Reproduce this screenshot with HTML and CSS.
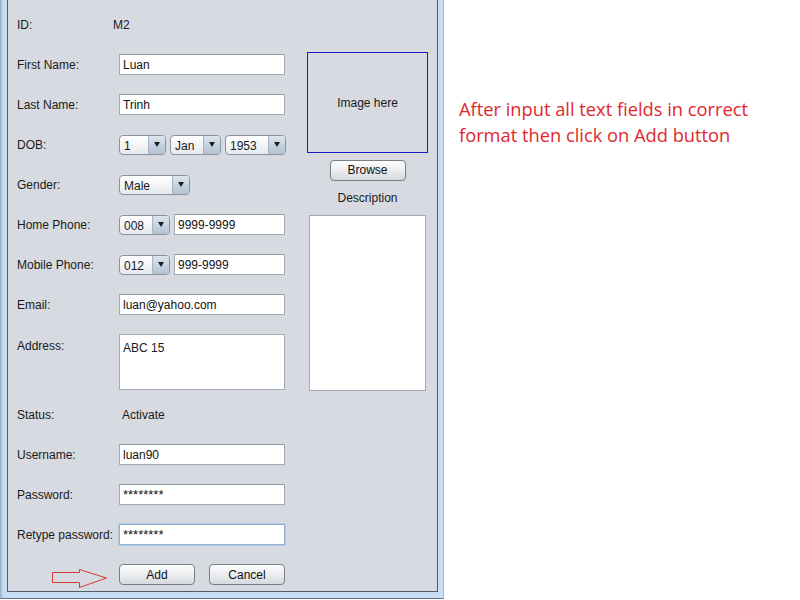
FILE: index.html
```html
<!DOCTYPE html>
<html>
<head>
<meta charset="utf-8">
<link rel="stylesheet" href="styles.css">
</head>
<body>
<div class="window">
  <div class="panel">
    <div class="form">
      <div class="row first"><span class="label">ID:</span><span class="value id-value">M2</span></div>
      <div class="row"><span class="label">First Name:</span><div class="field">Luan</div></div>
      <div class="row"><span class="label">Last Name:</span><div class="field">Trinh</div></div>
      <div class="row"><span class="label">DOB:</span>
        <div class="combos">
          <div class="combo w-day"><span class="ctext">1</span><span class="carrow"><i></i></span></div>
          <div class="combo w-mon"><span class="ctext">Jan</span><span class="carrow"><i></i></span></div>
          <div class="combo w-year"><span class="ctext">1953</span><span class="carrow"><i></i></span></div>
        </div>
      </div>
      <div class="row"><span class="label">Gender:</span>
        <div class="combo w-gender"><span class="ctext">Male</span><span class="carrow"><i></i></span></div>
      </div>
      <div class="row"><span class="label">Home Phone:</span>
        <div class="combos">
          <div class="combo w-code"><span class="ctext">008</span><span class="carrow"><i></i></span></div>
          <div class="field phone">9999-9999</div>
        </div>
      </div>
      <div class="row"><span class="label">Mobile Phone:</span>
        <div class="combos">
          <div class="combo w-code"><span class="ctext">012</span><span class="carrow"><i></i></span></div>
          <div class="field phone">999-9999</div>
        </div>
      </div>
      <div class="row"><span class="label">Email:</span><div class="field">luan@yahoo.com</div></div>
      <div class="row tall"><span class="label top">Address:</span><div class="area">ABC 15</div></div>
      <div class="row status"><span class="label">Status:</span><span class="value status-value">Activate</span></div>
      <div class="row"><span class="label">Username:</span><div class="field">luan90</div></div>
      <div class="row"><span class="label">Password:</span><div class="field pw">********</div></div>
      <div class="row"><span class="label">Retype password:</span><div class="field pw focused">********</div></div>
      <div class="row buttons">
        <span class="label arrow-slot">
          <svg class="arrow" width="60" height="26" viewBox="0 0 60 26">
            <polygon points="2.5,8.5 29.5,8.5 29.5,5.5 56.5,14 29.5,23.5 29.5,18.5 2.5,18.5" fill="none" stroke="#d33b3b" stroke-width="1"/>
          </svg>
        </span>
        <div class="btn form-btn add">Add</div>
        <div class="btn form-btn cancel">Cancel</div>
      </div>
    </div>
    <div class="side">
      <div class="image-box">Image here</div>
      <div class="btn browse">Browse</div>
      <div class="desc-label">Description</div>
      <div class="desc"></div>
    </div>
  </div>
</div>
<div class="note">After input all text fields in correct<br>format then click on Add button</div>
</body>
</html>
```

FILE: styles.css
```css
html, body {
  margin: 0;
  padding: 0;
  background: #ffffff;
}
body {
  display: flex;
  align-items: flex-start;
  font-family: "Liberation Sans", Arial, sans-serif;
  font-size: 12px;
  color: #1a1a1a;
}
.window {
  width: 444px;
  height: 599px;
  box-sizing: border-box;
  background: linear-gradient(to right, #b4c9de 0px, #c9def3 3px, #c9def3 100%);
  border-left: 1px solid #9cb0c4;
  border-right: 1px solid #9fb6cc;
  border-bottom: 1px solid #5f7288;
  padding: 0 5px 6px 6px;
}
.panel {
  height: 592px;
  box-sizing: border-box;
  background: #d7dae0;
  border: 1px solid #4d5d6e;
  border-top: none;
  display: flex;
}
.form {
  width: 290px;
  box-sizing: border-box;
  padding: 14px 0 0 9px;
  display: flex;
  flex-direction: column;
  gap: 19px;
}
.row {
  display: flex;
  align-items: center;
  height: 21px;
}
.row.tall {
  height: 56px;
  align-items: flex-start;
}
.row.status {
  margin-top: -5px;
}
.label {
  width: 102px;
  flex: none;
  line-height: 15px;
  padding-top: 2px;
}
.label.top {
  padding-top: 5px;
}
.value {
  line-height: 15px;
  padding-top: 2px;
}
.id-value {
  margin-left: -6px;
}
.status-value {
  margin-left: 3px;
}
.field {
  width: 166px;
  height: 21px;
  box-sizing: border-box;
  background: #ffffff;
  border: 1px solid #a4aab1;
  border-top-color: #959ba3;
  padding: 2px 3px 0;
  line-height: 17px;
  color: #111;
}
.field.phone {
  width: 111px;
}
.field.pw {
  font-size: 13px;
  padding-top: 1px;
}
.field.focused {
  border: 1px solid #8fb0d2;
  box-shadow: 0 0 0 1px #b7cde3;
}
.area {
  width: 166px;
  height: 56px;
  box-sizing: border-box;
  background: #ffffff;
  border: 1px solid #a4aab1;
  padding: 6px 3px 0;
  line-height: 15px;
}
.combos {
  display: flex;
  gap: 4px;
  align-items: center;
}
.combo {
  height: 20px;
  box-sizing: border-box;
  border: 1px solid #8a949f;
  border-radius: 4px;
  background: linear-gradient(#ffffff, #e6e9ed);
  display: flex;
  overflow: hidden;
}
.ctext {
  flex: 1;
  padding: 2px 0 0 4px;
  line-height: 16px;
}
.carrow {
  width: 16px;
  flex: none;
  border-left: 1px solid #a7b3bf;
  background: linear-gradient(#dce5ee, #b2c2d3);
  display: flex;
  align-items: center;
  justify-content: center;
}
.carrow i {
  width: 0;
  height: 0;
  border-left: 3.5px solid transparent;
  border-right: 3.5px solid transparent;
  border-top: 5px solid #1e1e1e;
}
.w-day { width: 47px; }
.w-mon { width: 51px; }
.w-year { width: 61px; }
.w-gender { width: 71px; }
.w-code { width: 51px; }
.btn {
  height: 21px;
  box-sizing: border-box;
  border: 1px solid #7b7f85;
  border-radius: 4px;
  background: linear-gradient(#fdfdfd, #e9ebee 55%, #d5d8dd);
  text-align: center;
  line-height: 19px;
  color: #111;
}
.form-btn {
  line-height: 17px;
  padding-top: 2px;
}
.buttons {
  gap: 0;
}
.arrow-slot {
  display: flex;
  align-items: center;
  height: 21px;
  padding-top: 0;
}
.arrow {
  margin-left: 33px;
  margin-top: 4px;
}
.btn.add {
  width: 76px;
}
.btn.cancel {
  width: 76px;
  margin-left: 14px;
}
.side {
  width: 121px;
  margin-left: 9px;
  padding-top: 52px;
  display: flex;
  flex-direction: column;
  align-items: center;
}
.image-box {
  width: 121px;
  height: 101px;
  box-sizing: border-box;
  border: 1px solid #1a1ac8;
  display: flex;
  align-items: center;
  justify-content: center;
}
.btn.browse {
  width: 76px;
  margin-top: 7px;
}
.desc-label {
  margin-top: 10px;
  line-height: 15px;
}
.desc {
  margin-top: 9px;
  width: 117px;
  height: 176px;
  box-sizing: border-box;
  background: #ffffff;
  border: 1px solid #a4aab1;
}
.note {
  padding: 96px 0 0 15px;
  font-family: "Open Sans", "Noto Sans", sans-serif;
  font-size: 18.3px;
  line-height: 26px;
  color: #e0282c;
  white-space: nowrap;
}
```
